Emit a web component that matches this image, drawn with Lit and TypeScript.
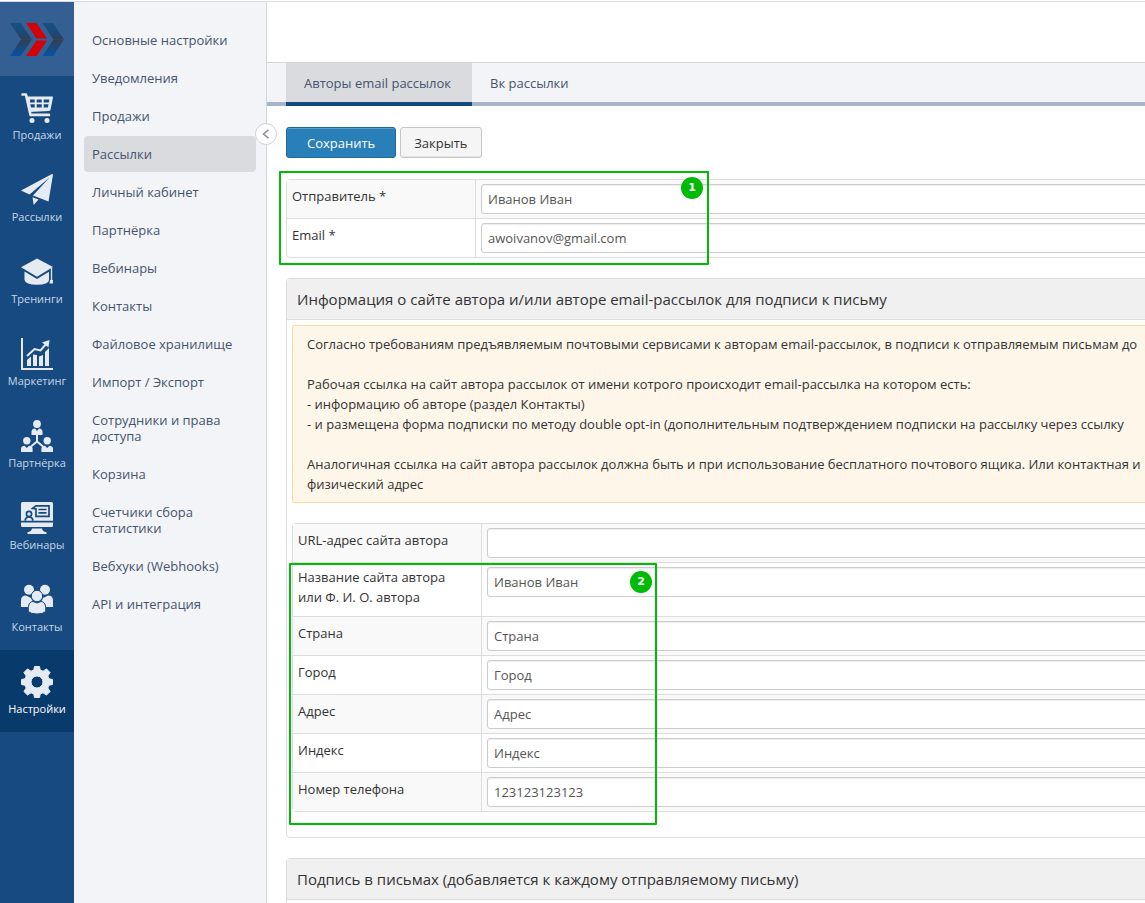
import { LitElement, html, svg, css } from "lit";
import { customElement, state } from "lit/decorators.js";
import { classMap } from "lit/directives/class-map.js";

const icons: Record<string, unknown> = {
  cart: svg`
    <path d="M1.500 2.500H5L9.500 22.900H28" fill="none" stroke="currentColor" stroke-width="2.600" stroke-linecap="round" stroke-linejoin="round"/>
    <path fill-rule="evenodd" fill="currentColor" d="M4.500 4.500H31.500Q32 4.500 32 5.200L29.600 17.500Q29.300 18.700 28 18.900L8 20ZM9 7.500V10.500H13.700V7.500ZM15.700 7.500V10.500H20.700V7.500ZM22.700 7.500V10.500H27.800L28.300 7.500ZM9.300 12.300L10 15.600H13.700V12.300ZM15.700 12.300V15.600H20.700V12.300ZM22.700 12.300V15.600H26.900L27.500 12.300Z"/>
    <circle cx="11" cy="28.500" r="2.500" fill="currentColor"/><circle cx="26" cy="28.500" r="2.500" fill="currentColor"/>`,
  plane: svg`<path fill="currentColor" d="M31 0L0 16.500L8.500 20.500L28.500 3.500L12 21.500L27.500 27.500L32 .500ZM11.500 23.300L17.500 25.600L12.700 31Z"/>`,
  cap: svg`
    <path fill="currentColor" d="M16 2.500L32 11L16 20.700L0 11.300Z"/>
    <path fill="currentColor" d="M3.500 15.500L16 23L28 15.700V24Q27.500 28.800 16 28.800T3.500 24Z"/>
    <path d="M30.500 12V25" stroke="currentColor" stroke-width="1.300"/><path fill="currentColor" d="M29 24H32V27.500H28.500Z"/>`,
  chart: svg`
    <path d="M1 0V31H32" fill="none" stroke="currentColor" stroke-width="2"/>
    <path fill="currentColor" d="M6 22L10 18.500V28H6ZM12 16.500L16 17V28H12ZM18 18.500L22 17V28H18ZM24 14L28 10V28H24Z"/>
    <path d="M6 18L13.500 11L19.500 12.500L26 5" fill="none" stroke="currentColor" stroke-width="2"/>
    <path fill="currentColor" d="M21 4.500L28.500 2L27.500 9.500Z"/>`,
  partners: svg`
    <g fill="currentColor"><circle cx="16" cy="4" r="3.900"/><path d="M10.500 15V11.500Q11 8.500 14 8.500L16 11L18 8.500Q21 8.500 21.500 11.500V15Z"/>
    <circle cx="5.800" cy="20.800" r="3.700"/><path d="M0 32V28.500Q.500 25.700 3.500 25.700L5.800 28L8 25.700Q11.300 25.700 11.600 28.500V32Z"/>
    <circle cx="26.200" cy="20.800" r="3.700"/><path d="M20.400 32V28.500Q20.700 25.700 24 25.700L26.200 28L28.500 25.700Q31.500 25.700 32 28.500V32Z"/></g>
    <path d="M16 14V21.500M10 26.500L16 21.500L22 26.500" fill="none" stroke="currentColor" stroke-width="2"/>`,
  webinar: svg`
    <g fill="currentColor"><path d="M1.500 0H30.500Q32 0 32 1.500V18.700H0V1.500Q0 0 1.500 0Z"/><path d="M0 20.500H32V23.500Q32 25 30.500 25H1.500Q0 25 0 23.500ZM11 26.500H21Q21.300 29.500 25.500 30.300V32H6.500V30.300Q10.700 29.500 11 26.500Z"/></g>
    <g class="ink" fill="none" stroke-width="1.700"><circle cx="8" cy="12" r="2.600"/><path d="M4.300 18.700V17.500Q5 15 8 15T11.700 17.500V18.700M11.500 6.500L15 3.800H28V14.300H15V7Z"/><path d="M17.500 7.500H25.500M17.500 10.800H25.500"/></g>`,
  people: svg`
    <g fill="currentColor"><circle cx="8" cy="5.800" r="5"/><circle cx="24" cy="5.800" r="5"/><path d="M0 23V16.500Q0 11.500 5 11.500L10 14L12 18Q7 19 7 23ZM32 23V16.500Q32 11.500 27 11.500L22 14L20 18Q25 19 25 23Z"/></g>
    <g class="ink" fill="currentColor" stroke-width="1"><path d="M7.300 27.500V23.500Q8 17.500 12 17.500L16 19L20 17.500Q24 17.500 24.700 23.500V27.500Q22 30 16 30T7.300 27.500Z"/><circle cx="16" cy="12" r="5.700"/></g>`,
  gear: svg`<path fill="currentColor" fill-rule="evenodd" stroke="currentColor" stroke-width="1" stroke-linejoin="round" d="M13.500 .500H18.500L19.200 4L22 5.200L25.500 2.900L29.100 6.500L26.800 10L28 12.800L31.500 13.500V18.500L28 19.200L26.800 22L29.100 25.500L25.500 29.100L22 26.800L19.200 28L18.500 31.500H13.500L12.800 28L10 26.800L6.500 29.100L2.900 25.500L5.200 22L4 19.200L.500 18.500V13.500L4 12.800L5.200 10L2.900 6.500L6.500 2.900L10 5.200L12.800 4ZM16 10A6 6 0 1 0 16 22A6 6 0 1 0 16 10Z"/>`,
};

const sections = [
  ["cart", "Продажи"], ["plane", "Рассылки"], ["cap", "Тренинги"], ["chart", "Маркетинг"],
  ["partners", "Партнёрка"], ["webinar", "Вебинары"], ["people", "Контакты"], ["gear", "Настройки"],
];

const settings = [
  "Основные настройки", "Уведомления", "Продажи", "Рассылки", "Личный кабинет", "Партнёрка",
  "Вебинары", "Контакты", "Файловое хранилище", "Импорт / Экспорт", "Сотрудники и права доступа",
  "Корзина", "Счетчики сбора статистики", "Вебхуки (Webhooks)", "API и интеграция",
];

interface Field { id: string; label: string; value: string }

const senderFields: Field[] = [
  { id: "sender", label: "Отправитель *", value: "Иванов Иван" },
  { id: "email", label: "Email *", value: "awoivanov@gmail.com" },
];
const urlField: Field = { id: "url", label: "URL-адрес сайта автора", value: "" };
const siteFields: Field[] = [
  { id: "site", label: "Название сайта автора или Ф. И. О. автора", value: "Иванов Иван" },
  { id: "country", label: "Страна", value: "Страна" },
  { id: "city", label: "Город", value: "Город" },
  { id: "address", label: "Адрес", value: "Адрес" },
  { id: "zip", label: "Индекс", value: "Индекс" },
  { id: "phone", label: "Номер телефона", value: "123123123123" },
];

@customElement("app-root")
export class AppRoot extends LitElement {
  @state() private section = "Настройки";
  @state() private page = "Рассылки";

  static styles = css`
    :host {
      display: block;
      font-family: "Open Sans", "Noto Sans", sans-serif;
      font-size: 13px;
      line-height: 20px;
      color: #333;
    }
    * { box-sizing: border-box; }
    a { color: inherit; text-decoration: none; }
    .shell { display: flex; height: 100vh; overflow: hidden; border-top: 1px solid #dcdcde; margin-top: 1px; }
    .rail { flex: none; width: 74px; background: #164a80; color: #c8d6e6; display: flex; flex-direction: column; }
    .logo { height: 74px; background: #335f93; display: flex; align-items: center; justify-content: center; }
    .rail-item {
      height: 82px; padding-top: 16px; display: flex; flex-direction: column; align-items: center; gap: 2px;
      font-size: 11px; line-height: 18px;
    }
    .rail-item.on { background: #093a6c; color: #fff; }
    .rail-item svg { color: #e6ebf3; display: block; }
    .ink { stroke: #164a80; }
    .menu {
      flex: none; width: 193px; background: #f3f4f7; border-right: 1px solid #d5d6da; padding: 20px 10px;
      display: flex; flex-direction: column; gap: 2px; position: relative; color: #44546e;
    }
    .menu a { padding: 10px 8px; line-height: 16px; border-radius: 4px; }
    .menu a.on { background: #dadbdf; }
    .collapse {
      position: absolute; right: -11px; top: 121px; width: 22px; height: 22px; padding: 0; border-radius: 50%;
      background: #fff; border: 1px solid #d0d1d5; display: grid; place-items: center; z-index: 1;
    }
    main { flex: 1; min-width: 0; overflow: hidden; background: #fff; }
    .top { height: 60px; }
    .tabs { display: flex; padding-left: 19px; border-top: 1px solid #d5d6da; background: #f3f4f7; color: #44546e; box-shadow: inset 0 -4px #a6b5ca; }
    .tabs a { padding: 10px 21px 13px 18px; }
    .tabs a.on { background: #dadbdf; box-shadow: inset 0 -4px #13477f; }
    .content { padding: 21px 0 0 19px; width: calc(100% + 40px); }
    .actions { display: flex; gap: 4px; margin-bottom: 21px; }
    .btn {
      font: inherit; height: 31px; padding: 0 13px; border: 1px solid #c6c6c6; border-radius: 3px;
      background: #f5f5f5; color: #333; box-shadow: inset 0 -1px #e3e3e3;
    }
    .btn.primary { background: #2980b9; border-color: #20679a; color: #fff; padding: 0 20px; box-shadow: inset 0 1px #5a9fcc; }
    .fields { border: 1px solid #ddd; border-radius: 4px; }
    .rows { position: relative; }
    .row { display: grid; grid-template-columns: 189px 1fr; border-top: 1px solid #ddd; }
    .fields > .row:first-child, .first .row:first-child { border-top: 0; }
    .row.odd { background: #f9f9f9; }
    .row label { display: flex; align-items: center; min-height: 24px; align-self: start; }
    .name { padding: 4px 14px 9px 5px; border-right: 1px solid #ddd; }
    .value { padding: 4px 5px; }
    .value input {
      font: inherit; color: #555; width: 100%; height: 30px; padding: 0 6px; border: 1px solid #ccc;
      border-radius: 3px; background: #fff; box-shadow: inset 0 1px 1px #ededed; display: block;
    }
    .panel { border: 1px solid #ddd; border-radius: 4px; margin-top: 20px; }
    .panel h2 { margin: 0; padding: 10px; font-size: 15px; font-weight: 400; background: #f0f0f0; border-bottom: 1px solid #ddd; }
    .body { padding: 5px 5px 25px; }
    .notice { background: #fff6ea; border: 1px solid #fcd9a0; border-radius: 2px; padding: 8px 14px; margin-bottom: 20px; white-space: pre; }
    .mark { position: absolute; border: 2px solid #00bb05; pointer-events: none; border-radius: 1px; }
    .mark.sender { left: -8px; top: -9px; width: 430px; height: 94px; }
    .mark.site { left: -4px; top: 1px; width: 368px; height: 262px; }
    .dot {
      position: absolute; right: 4px; top: 4px; width: 22px; height: 22px; border-radius: 50%; background: #00bb05;
      color: #fff; font: bold 11px/22px "DejaVu Sans", sans-serif; text-align: center;
    }
    .mark.site .dot { right: 3px; top: 6px; }
  `;

  private row(f: Field, odd: boolean) {
    return html`<div class=${classMap({ row: true, odd })}>
      <div class="name"><label for=${f.id}>${f.label}</label></div>
      <div class="value"><input id=${f.id} type="text" .value=${f.value} /></div>
    </div>`;
  }

  render() {
    return html`<div class="shell">
      <nav class="rail">
        <a class="logo" href="#" aria-label="Главная">
          <svg width="54" height="33" viewBox="0 0 54 33">
            <defs>
              <linearGradient id="up" gradientUnits="userSpaceOnUse" x1="0" y1="0" x2="0" y2="17"><stop offset="0" stop-color="#174f88"/><stop offset=".5" stop-color="#1b4a78"/><stop offset="1" stop-color="#303f50"/></linearGradient>
              <linearGradient id="down" gradientUnits="userSpaceOnUse" x1="0" y1="16" x2="0" y2="33"><stop offset="0" stop-color="#303f50"/><stop offset="1" stop-color="#0653a3"/></linearGradient>
            </defs>
            <path fill="url(#up)" d="M0 0H10.500L22 16.500H11ZM32.500 0H43L54 16.500H43.500Z"/>
            <path fill="url(#down)" d="M11 16.500H22L10.500 33H0ZM43.500 16.500H54L43 33H32.500Z"/>
            <path fill="#d60007" d="M16 0H26.500L37 15.500H26.500ZM26.500 17.500H37L26.500 33H16Z"/>
          </svg>
        </a>
        ${sections.map(([icon, label]) => html`<a href="#" class=${classMap({ "rail-item": true, on: label === this.section })}
          @click=${() => (this.section = label)}>
          <svg width="32" height="32" viewBox="0 0 32 32" aria-hidden="true">${icons[icon]}</svg><span>${label}</span></a>`)}
      </nav>
      <nav class="menu">
        ${settings.map((s) => html`<a href="#" class=${classMap({ on: s === this.page })} @click=${() => (this.page = s)}>${s}</a>`)}
        <button class="collapse" aria-label="Свернуть меню">
          <svg width="8" height="10" viewBox="0 0 8 10"><path d="M6.500 .800L1.500 5L6.500 9.200" fill="none" stroke="#909297" stroke-width="1.600"/></svg>
        </button>
      </nav>
      <main>
        <div class="top"></div>
        <nav class="tabs"><a class="on" href="#">Авторы email рассылок</a><a href="#">Вк рассылки</a></nav>
        <div class="content">
          <div class="actions"><button class="btn primary">Сохранить</button><button class="btn">Закрыть</button></div>
          <div class="fields"><div class="rows first">
            ${senderFields.map((f, i) => this.row(f, i % 2 === 0))}
            <div class="mark sender"><span class="dot">1</span></div>
          </div></div>
          <section class="panel">
            <h2>Информация о сайте автора и/или авторе email-рассылок для подписи к письму</h2>
            <div class="body">
              <div class="notice">Согласно требованиям предъявляемым почтовыми сервисами к авторам email-рассылок, в подписи к отправляемым письмам до<br><br>Рабочая ссылка на сайт автора рассылок от имени котрого происходит email-рассылка на котором есть:<br>- информацию об авторе (раздел Контакты)<br>- и размещена форма подписки по методу double opt-in (дополнительным подтверждением подписки на рассылку через ссылку<br><br>Аналогичная ссылка на сайт автора рассылок должна быть и при использование бесплатного почтового ящика. Или контактная и<br>физический адрес</div>
              <div class="fields">
                ${this.row(urlField, true)}
                <div class="rows">
                  ${siteFields.map((f, i) => this.row(f, i % 2 === 1))}
                  <div class="mark site"><span class="dot">2</span></div>
                </div>
              </div>
            </div>
          </section>
          <section class="panel">
            <h2>Подпись в письмах (добавляется к каждому отправляемому письму)</h2>
            <div class="body"></div>
          </section>
        </div>
      </main>
    </div>`;
  }
}
